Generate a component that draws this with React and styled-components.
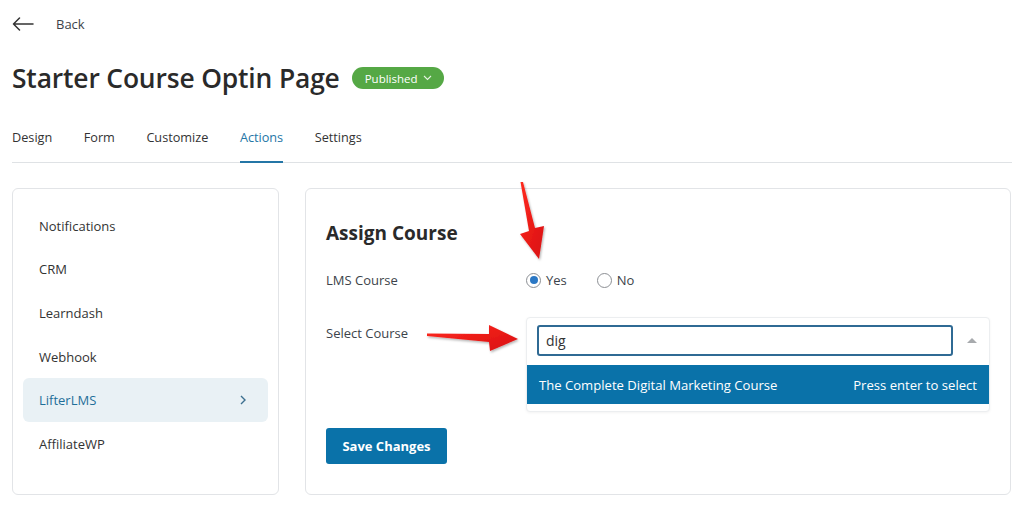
import React from "react";
import styled, { createGlobalStyle } from "styled-components";

const Global = createGlobalStyle`
  html, body { margin: 0; padding: 0; background: #fff; }
  body { font-family: "Open Sans", "Noto Sans", sans-serif; color: #2c3338; }
  * { box-sizing: border-box; }
`;

const Page = styled.div`
  position: relative;
  width: 1024px;
  height: 506px;
  padding: 0 12px;
  overflow: hidden;
`;

const BackRow = styled.div`
  height: 48px;
  display: flex;
  align-items: center;
  gap: 22px;
  font-size: 13px;
  color: #3c434a;
`;

const TitleRow = styled.div`
  display: flex;
  align-items: center;
  gap: 12px;
  margin-top: 12px;
  height: 36px;
`;

const Title = styled.h1`
  margin: 0;
  font-size: 26.4px;
  font-weight: 600;
  color: #2a2a2a;
  letter-spacing: -0.15px;
`;

const Badge = styled.span`
  display: inline-flex;
  align-items: center;
  gap: 5px;
  height: 22px;
  padding: 0 12px 0 13px;
  border-radius: 11px;
  background: #55a845;
  color: #fff;
  font-size: 11.5px;
`;

const Tabs = styled.nav`
  display: flex;
  gap: 31.5px;
  margin-top: 23px;
  border-bottom: 1px solid #dfe2e5;
`;

const Tab = styled.div`
  font-size: 12.7px;
  line-height: 18px;
  padding: 9px 0 15px;
  color: ${(p) => (p.$active ? "#2476a6" : "#333")};
  font-weight: ${(p) => (p.$active ? 500 : 400)};
  border-bottom: 2px solid ${(p) => (p.$active ? "#2476a6" : "transparent")};
  margin-bottom: -1px;
`;

const Main = styled.div`
  display: grid;
  grid-template-columns: 267px 706px;
  gap: 26px;
  margin-top: 25px;
`;

const Card = styled.div`
  border: 1px solid #e2e4e7;
  border-radius: 6px;
  height: 307px;
  background: #fff;
`;

const SideCard = styled(Card)`
  padding: 15px 10px;
`;

const SideItem = styled.div`
  height: 43.6px;
  display: flex;
  align-items: center;
  justify-content: space-between;
  padding: 0 22px 0 16px;
  font-size: 13px;
  border-radius: 6px;
  color: ${(p) => (p.$active ? "#1f6f99" : "#333")};
  background: ${(p) => (p.$active ? "#e9f1f5" : "transparent")};
`;

const ContentCard = styled(Card)`
  padding: 31px 21px 0 20px;
`;

const SectionTitle = styled.h2`
  margin: 0;
  font-size: 19px;
  font-weight: 700;
  line-height: 26px;
  color: #2a2a2a;
`;

const FormRow = styled.div`
  display: grid;
  grid-template-columns: 200px 1fr;
  align-items: ${(p) => (p.$top ? "start" : "center")};
  margin-top: ${(p) => p.$mt}px;
`;

const Label = styled.div`
  font-size: 13px;
  color: #3c434a;
  padding-top: ${(p) => (p.$pt || 0)}px;
`;

const Radios = styled.div`
  display: flex;
  gap: 30px;
  font-size: 13px;
  color: #3c434a;
`;

const RadioLabel = styled.label`
  display: flex;
  align-items: center;
  gap: 5px;
`;

const RadioCircle = styled.span`
  width: 15px;
  height: 15px;
  border-radius: 50%;
  border: 1px solid #8c8f94;
  display: inline-flex;
  align-items: center;
  justify-content: center;
  background: #fff;
  &::after {
    content: "";
    width: 8px;
    height: 8px;
    border-radius: 50%;
    background: ${(p) => (p.$checked ? "#2b78c5" : "transparent")};
  }
`;

const SelectBox = styled.div`
  width: 464px;
  border: 1px solid #eceef0;
  border-radius: 4px;
  box-shadow: 0 1px 3px rgba(0, 0, 0, 0.05);
  padding: 7px 0 7px;
  background: #fff;
`;

const SearchRow = styled.div`
  display: flex;
  align-items: center;
  padding: 0 0 0 10px;
`;

const SearchInput = styled.div`
  width: 416px;
  height: 31px;
  border: 2px solid #2f6a94;
  border-radius: 3px;
  display: flex;
  align-items: center;
  padding-left: 7px;
  font-size: 14px;
  color: #333;
`;

const Caret = styled.span`
  margin-left: 14px;
  width: 0;
  height: 0;
  border-left: 5px solid transparent;
  border-right: 5px solid transparent;
  border-bottom: 5px solid #a7aaad;
`;

const Option = styled.div`
  margin-top: 9px;
  height: 39px;
  background: #0a72a9;
  color: #fff;
  font-size: 13.1px;
  display: flex;
  align-items: center;
  justify-content: space-between;
  padding: 0 12px;
`;

const SaveButton = styled.button`
  margin-top: 16px;
  width: 121px;
  height: 36px;
  border: none;
  border-radius: 3px;
  background: #0a72a9;
  color: #fff;
  font-family: inherit;
  font-size: 13px;
  font-weight: 700;
`;

const Annotations = styled.svg`
  position: absolute;
  left: 0;
  top: 0;
  pointer-events: none;
`;

export default function App() {
  const items = ["Notifications", "CRM", "Learndash", "Webhook", "LifterLMS", "AffiliateWP"];
  return (
    <>
      <Global />
      <Page>
        <BackRow>
          <svg width="22" height="14" viewBox="0 0 22 14" fill="none" stroke="#333" strokeWidth="1.5" strokeLinecap="round" strokeLinejoin="round">
            <path d="M21 7H1.5M7.5 1L1.5 7l6 6" />
          </svg>
          <span>Back</span>
        </BackRow>
        <TitleRow>
          <Title>Starter Course Optin Page</Title>
          <Badge>
            Published
            <svg width="9" height="6" viewBox="0 0 9 6" fill="none" stroke="#e6f3e2" strokeWidth="1.1">
              <path d="M1 1l3.5 3.5L8 1" />
            </svg>
          </Badge>
        </TitleRow>
        <Tabs>
          <Tab>Design</Tab>
          <Tab>Form</Tab>
          <Tab>Customize</Tab>
          <Tab $active>Actions</Tab>
          <Tab>Settings</Tab>
        </Tabs>
        <Main>
          <SideCard>
            {items.map((it) => (
              <SideItem key={it} $active={it === "LifterLMS"}>
                {it}
                {it === "LifterLMS" && (
                  <svg width="6" height="10" viewBox="0 0 6 10" fill="none" stroke="#3c6f8f" strokeWidth="1.4">
                    <path d="M1 1l4 4-4 4" />
                  </svg>
                )}
              </SideItem>
            ))}
          </SideCard>
          <ContentCard>
            <SectionTitle>Assign Course</SectionTitle>
            <FormRow $mt={25}>
              <Label>LMS Course</Label>
              <Radios>
                <RadioLabel>
                  <RadioCircle $checked />
                  Yes
                </RadioLabel>
                <RadioLabel>
                  <RadioCircle />
                  No
                </RadioLabel>
              </Radios>
            </FormRow>
            <FormRow $mt={28} $top>
              <Label $pt={7}>Select Course</Label>
              <SelectBox>
                <SearchRow>
                  <SearchInput>dig</SearchInput>
                  <Caret />
                </SearchRow>
                <Option>
                  <span>The Complete Digital Marketing Course</span>
                  <span>Press enter to select</span>
                </Option>
              </SelectBox>
            </FormRow>
            <SaveButton>Save Changes</SaveButton>
          </ContentCard>
        </Main>
        <Annotations width="1024" height="506" viewBox="0 0 1024 506">
          <defs>
            <linearGradient id="ag" x1="0" y1="0" x2="1" y2="1">
              <stop offset="0" stopColor="#ff2a1f" />
              <stop offset="1" stopColor="#d80f12" />
            </linearGradient>
            <filter id="sh" x="-20%" y="-20%" width="140%" height="140%">
              <feDropShadow dx="1" dy="1.5" stdDeviation="1.2" floodColor="#000" floodOpacity="0.3" />
            </filter>
          </defs>
          <polygon
            points="520.5,182 523,182 535,228 544,226 539,259 520,234 529,231"
            fill="url(#ag)"
            filter="url(#sh)"
          />
          <polygon
            points="427,333.5 427,336 489,342 490,351 518,339 489,325 489,334"
            fill="url(#ag)"
            filter="url(#sh)"
          />
        </Annotations>
      </Page>
    </>
  );
}
